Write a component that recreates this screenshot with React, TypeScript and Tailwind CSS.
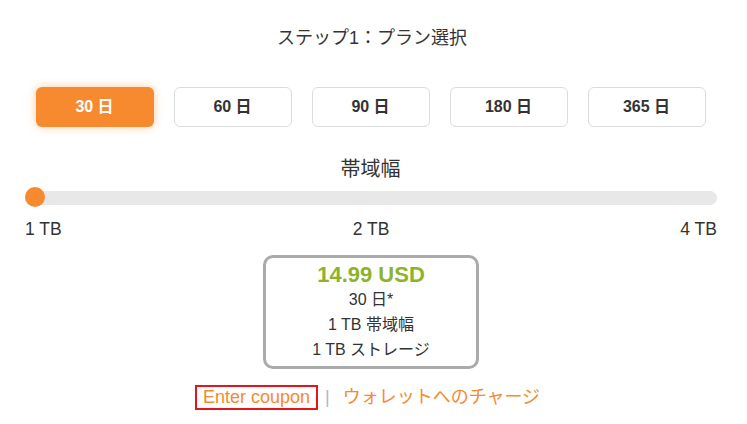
const PERIODS = ["30 日", "60 日", "90 日", "180 日", "365 日"];

const FONT = "font-['Liberation_Sans','Noto_Sans_CJK_JP',sans-serif]";

export default function App() {
  const active = 0;

  return (
    <main className={`w-[747px] h-[424px] bg-white text-[#333] ${FONT}`}>
      <div className="flex flex-col items-center pt-[27px]">
        <h2 className="mr-[3px] text-[18px] leading-[22px]">ステップ1：プラン選択</h2>

        <div className="mt-[38px] mr-[6px] flex gap-[20px]">
          {PERIODS.map((p, i) => (
            <button
              key={p}
              className={
                i === active
                  ? "w-[118px] h-[40px] rounded-[6px] bg-[#f7892f] text-white text-[16px] font-bold shadow-[0_0_8px_rgba(247,137,47,0.45)]"
                  : "w-[118px] h-[40px] rounded-[6px] border border-[#dcdcdc] bg-white text-[#333] text-[16px] font-bold"
              }
            >
              {p}
            </button>
          ))}
        </div>

        <p className="mt-[30px] mr-[6px] text-[20px] leading-[24px]">帯域幅</p>

        <div className="mt-[10px] w-full px-[25px]">
          <div className="relative h-[14px] w-[692px] rounded-full bg-[#e8e8e8]">
            <span className="absolute left-0 top-[-4px] h-[20px] w-[20px] rounded-full bg-[#f7892f]" />
          </div>
          <div className="mt-[14px] flex w-[692px] justify-between text-[17.5px] leading-[20px]">
            <span>1 TB</span>
            <span>2 TB</span>
            <span>4 TB</span>
          </div>
        </div>

        <div className="mt-[16px] mr-[5px] flex w-[216px] flex-col items-center rounded-[10px] border-[3px] border-[#aaaaaa] pt-[5px] pb-[4px]">
          <p className="text-[22px] font-bold leading-[24px] text-[#8db32b]">14.99 USD</p>
          <p className="text-[16px] leading-[25px]">30 日*</p>
          <p className="text-[16px] leading-[25px]">1 TB 帯域幅</p>
          <p className="text-[16px] leading-[25px]">1 TB ストレージ</p>
        </div>

        <div className="mt-[16px] mr-[12px] flex items-center text-[18px] leading-[21px] text-[#f7892f]">
          <a className="border-[2px] border-[#e8141c] px-[6px]">Enter coupon</a>
          <span className="mx-[7px] text-[#a8b8cc]">|</span>
          <a className="ml-[6px]">ウォレットへのチャージ</a>
        </div>
      </div>
    </main>
  );
}
